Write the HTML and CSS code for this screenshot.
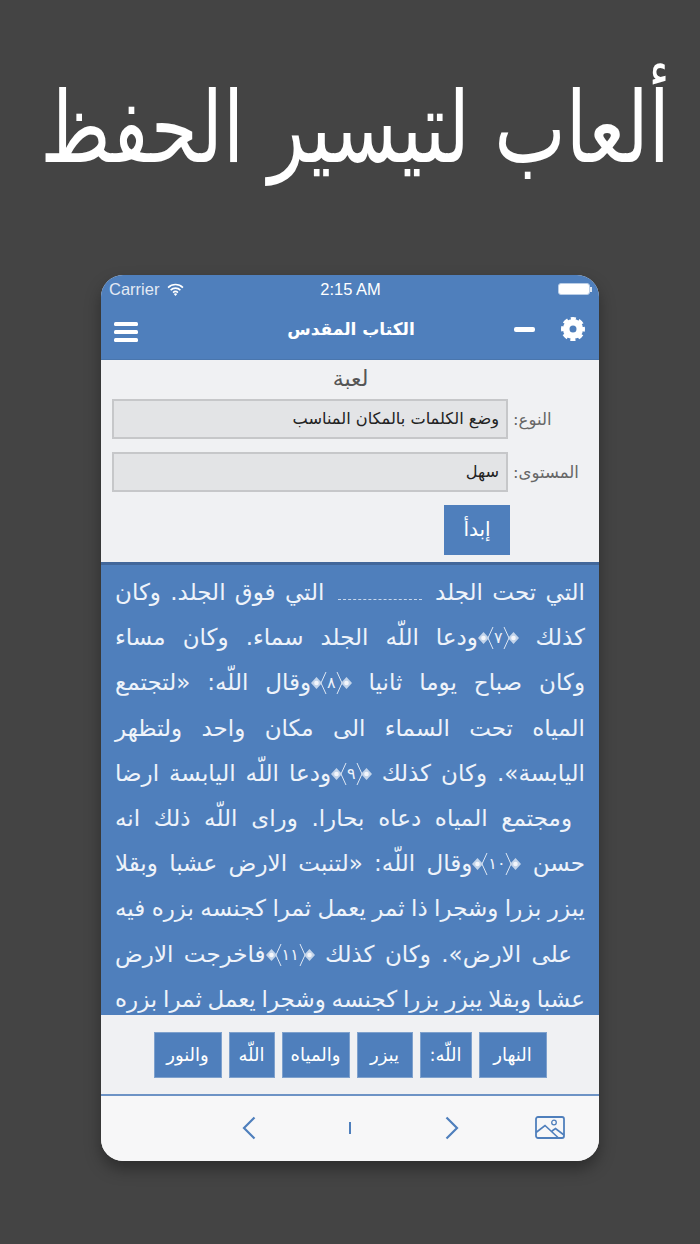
FILE: index.html
```html
<!DOCTYPE html>
<html lang="ar">
<head>
    <meta charset="UTF-8">
    <meta name="viewport" content="width=device-width, initial-scale=1.0">
    <title>ألعاب لتيسير الحفظ</title>
    <link rel="stylesheet" href="styles.css">
</head>
<body>
    <h1 class="headline" dir="rtl"><span class="headline-text">ألعاب لتيسير الحفظ</span></h1>

    <svg class="svg-defs" width="0" height="0">
        <defs>
            <g id="orn-right">
                <path d="M1 1l5 11-5 11" fill="none" stroke="#dfe8f4" stroke-width="1"/>
                <path d="M10.500 6l5.500 6-5.500 6-5.500-6z" fill="#c3d4ea"/>
                <circle cx="10.500" cy="12" r="2.300" fill="#f3f6fb"/>
            </g>
        </defs>
    </svg>

    <div class="phone">
        <div class="status-bar">
            <div class="status-left">
                <span>Carrier</span>
                <svg class="wifi" viewBox="0 0 16 12" width="17" height="13">
                    <path d="M1 4.200a10 10 0 0 1 14 0M3.400 6.600a6.600 6.600 0 0 1 9.200 0M5.700 8.900a3.300 3.300 0 0 1 4.600 0" fill="none" stroke="#fff" stroke-width="1.500"/>
                    <path d="M8 12l-1.600-1.700a2.200 2.200 0 0 1 3.200 0z" fill="#fff"/>
                </svg>
            </div>
            <div class="status-time">2:15 AM</div>
            <div class="status-right">
                <div class="battery"></div>
                <div class="battery-tip"></div>
            </div>
        </div>

        <div class="nav-bar">
            <svg class="menu-icon" viewBox="0 0 24 20" width="24" height="20">
                <rect x="0" y="0" width="24" height="4" rx="1.500" fill="#fff"/>
                <rect x="0" y="8" width="24" height="4" rx="1.500" fill="#fff"/>
                <rect x="0" y="16" width="24" height="4" rx="1.500" fill="#fff"/>
            </svg>
            <div class="nav-title" dir="rtl">الكتاب المقدس</div>
            <div class="nav-actions">
                <div class="minus"></div>
                <svg class="gear" viewBox="0 0 24 24" width="24" height="24">
                    <circle cx="12" cy="12" r="6.800" fill="none" stroke="#fff" stroke-width="6.600"/>
                    <circle cx="12" cy="12" r="10.300" fill="none" stroke="#fff" stroke-width="3.400" stroke-dasharray="5 3.090" stroke-dashoffset="2.500"/>
                </svg>
            </div>
        </div>

        <div class="game-form" dir="rtl">
            <div class="form-title">لعبة</div>
            <div class="form-row">
                <label>النوع:</label>
                <div class="select">وضع الكلمات بالمكان المناسب</div>
            </div>
            <div class="form-row">
                <label>المستوى:</label>
                <div class="select">سهل</div>
            </div>
            <div class="start-row">
                <div class="btn start-btn">إبدأ</div>
            </div>
        </div>

        <div class="reading" dir="rtl">
            <div class="line">التي تحت الجلد <span class="blank"></span> التي فوق الجلد. وكان</div>
            <div class="line">كذلك <span class="verse"><svg viewBox="0 0 16 24" width="16" height="24"><use href="#orn-right"/></svg>٧<svg class="flip" viewBox="0 0 16 24" width="16" height="24"><use href="#orn-right"/></svg></span>ودعا اللّه الجلد سماء. وكان مساء</div>
            <div class="line">وكان صباح يوما ثانيا <span class="verse"><svg viewBox="0 0 16 24" width="16" height="24"><use href="#orn-right"/></svg>٨<svg class="flip" viewBox="0 0 16 24" width="16" height="24"><use href="#orn-right"/></svg></span>وقال اللّه: «لتجتمع</div>
            <div class="line">المياه تحت السماء الى مكان واحد ولتظهر</div>
            <div class="line">اليابسة». وكان كذلك <span class="verse"><svg viewBox="0 0 16 24" width="16" height="24"><use href="#orn-right"/></svg>٩<svg class="flip" viewBox="0 0 16 24" width="16" height="24"><use href="#orn-right"/></svg></span>ودعا اللّه اليابسة ارضا</div>
            <div class="line indent">ومجتمع المياه دعاه بحارا. وراى اللّه ذلك انه</div>
            <div class="line">حسن <span class="verse"><svg viewBox="0 0 16 24" width="16" height="24"><use href="#orn-right"/></svg>١٠<svg class="flip" viewBox="0 0 16 24" width="16" height="24"><use href="#orn-right"/></svg></span>وقال اللّه: «لتنبت الارض عشبا وبقلا</div>
            <div class="line">يبزر بزرا وشجرا ذا ثمر يعمل ثمرا كجنسه بزره فيه</div>
            <div class="line indent">على الارض». وكان كذلك <span class="verse"><svg viewBox="0 0 16 24" width="16" height="24"><use href="#orn-right"/></svg>١١<svg class="flip" viewBox="0 0 16 24" width="16" height="24"><use href="#orn-right"/></svg></span>فاخرجت الارض</div>
            <div class="line">عشبا وبقلا يبزر بزرا كجنسه وشجرا يعمل ثمرا بزره</div>
        </div>

        <div class="word-bank" dir="rtl">
            <div class="btn word word-a">النهار</div>
            <div class="btn word word-b">اللّه:</div>
            <div class="btn word word-c">يبزر</div>
            <div class="btn word word-a">والمياه</div>
            <div class="btn word word-d">اللّه</div>
            <div class="btn word word-a">والنور</div>
        </div>

        <div class="toolbar">
            <svg class="tool-chevron chevron-prev" viewBox="0 0 14 24" width="14" height="24">
                <path d="M12.500 1.500L2 12l10.500 10.500" fill="none" stroke="#4f7fbc" stroke-width="2.200"/>
            </svg>
            <div class="page-mark"></div>
            <svg class="tool-chevron" viewBox="0 0 14 24" width="14" height="24">
                <path d="M1.500 1.500L12 12 1.500 22.500" fill="none" stroke="#4f7fbc" stroke-width="2.200"/>
            </svg>
            <svg class="picture-icon" viewBox="0 0 30 23" width="30" height="23">
                <rect x="1" y="1" width="28" height="21" rx="2" fill="none" stroke="#4f7fbc" stroke-width="1.800"/>
                <circle cx="19" cy="6.500" r="2.300" fill="none" stroke="#4f7fbc" stroke-width="1.300"/>
                <path d="M1 16.500l9-7 13 12M17 15l3.500-2.500 8.500 6.500" fill="none" stroke="#4f7fbc" stroke-width="1.600"/>
            </svg>
        </div>
    </div>
</body>
</html>
```

FILE: styles.css
```css
* {
    box-sizing: border-box;
}
body {
    margin: 0;
    height: 1244px;
    background-color: #444444;
    font-family: "DejaVu Sans", sans-serif;
    overflow: hidden;
}
.svg-defs {
    display: block;
    height: 0;
}
.headline {
    margin: 0;
    height: 275px;
    padding: 78px 0 0 10px;
    color: #fff;
    font-size: 76px;
    line-height: 100px;
    font-weight: normal;
    text-align: center;
    white-space: nowrap;
}
.headline-text {
    display: inline-block;
    transform: scaleY(1.3);
}
.phone {
    width: 498px;
    height: 886px;
    margin: 0 auto;
    border-radius: 22px;
    overflow: hidden;
    background-color: #f7f7f8;
    box-shadow: 0 8px 16px rgba(0, 0, 0, 0.35);
    display: flex;
    flex-direction: column;
}
.status-bar {
    height: 28px;
    padding: 0 7px 0 8px;
    background-color: #4f7fbc;
    color: #fff;
    font-family: "Liberation Sans", sans-serif;
    font-size: 16.500px;
    display: flex;
    align-items: center;
    justify-content: space-between;
}
.status-left {
    width: 120px;
    display: flex;
    align-items: center;
    gap: 8px;
    color: #e3eaf4;
}
.status-right {
    width: 120px;
    display: flex;
    align-items: center;
    justify-content: flex-end;
}
.battery {
    width: 32px;
    height: 12px;
    border: 1px solid #b9cde6;
    border-radius: 3px;
    background-color: #fff;
}
.battery-tip {
    width: 2px;
    height: 5px;
    background-color: #dfe7f2;
}
.nav-bar {
    height: 57px;
    padding: 0 14px 4px 13px;
    background-color: #4f7fbc;
    border-bottom: 1px solid #4a76ad;
    display: flex;
    align-items: center;
    justify-content: space-between;
}
.menu-icon {
    margin-top: 5px;
}
.nav-title {
    color: #fff;
    font-size: 17px;
    font-weight: bold;
    margin-left: 50px;
}
.nav-actions {
    display: flex;
    align-items: center;
    gap: 26px;
}
.minus {
    width: 21px;
    height: 5px;
    border-radius: 2px;
    background-color: #fff;
}
.game-form {
    height: 202px;
    background-color: #f0f1f3;
    padding: 6px 20px 0 11px;
}
.form-title {
    color: #555;
    font-size: 22px;
    line-height: 26px;
    text-align: center;
    margin-bottom: 7px;
    padding-left: 10px;
}
.form-row {
    display: flex;
    align-items: center;
    height: 40px;
    margin-bottom: 13px;
}
.form-row label {
    width: 71px;
    flex: none;
    color: #666;
    font-size: 16.500px;
    text-align: left;
    padding-left: 5px;
    white-space: nowrap;
}
.select {
    flex: 1;
    height: 40px;
    line-height: 36px;
    padding: 0 7px;
    background-color: #e3e4e6;
    border: 2px solid #c6c7c9;
    color: #222;
    font-size: 16.200px;
}
.start-row {
    padding-right: 69px;
}
.btn {
    background-color: #4f7fbc;
    color: #fff;
    text-align: center;
}
.start-btn {
    width: 66px;
    height: 50px;
    line-height: 48px;
    font-size: 20px;
}
.reading {
    height: 453px;
    padding: 5px 14px 0 14px;
    background-color: #4f7fbc;
    border-top: 3px solid #42679a;
    overflow: hidden;
    color: #eef3fa;
    font-size: 23px;
    word-spacing: -3px;
    line-height: 45.200px;
}
.line {
    white-space: nowrap;
    text-align: justify;
    text-align-last: justify;
}
.line.indent {
    padding-right: 13px;
}
.blank {
    display: inline-block;
    width: 84px;
    height: 14px;
    margin: 0 4px;
    border-bottom: 1px dashed #c9d8ec;
}
.verse {
    display: inline-flex;
    align-items: center;
    justify-content: center;
    font-size: 16px;
    line-height: 24px;
    height: 24px;
    vertical-align: -5px;
    word-spacing: 0;
}
.verse .flip {
    transform: scaleX(-1);
}
.word-bank {
    height: 81px;
    background-color: #f0f1f3;
    border-bottom: 2px solid #6d93c5;
    display: flex;
    align-items: center;
    justify-content: center;
    gap: 7px;
}
.word {
    height: 46px;
    line-height: 44px;
    font-size: 18px;
    border: 1px solid #7ea1cd;
}
.word-a {
    width: 68px;
}
.word-b {
    width: 52px;
}
.word-c {
    width: 56px;
}
.word-d {
    width: 46px;
}
.toolbar {
    flex: 1;
    padding-left: 141px;
    padding-bottom: 2px;
    background-color: #f7f7f8;
    display: flex;
    align-items: center;
}
.page-mark {
    width: 2px;
    height: 12px;
    margin: 0 94px 0 93px;
    background-color: #4f7fbc;
}
.picture-icon {
    margin-left: 76px;
}
```
